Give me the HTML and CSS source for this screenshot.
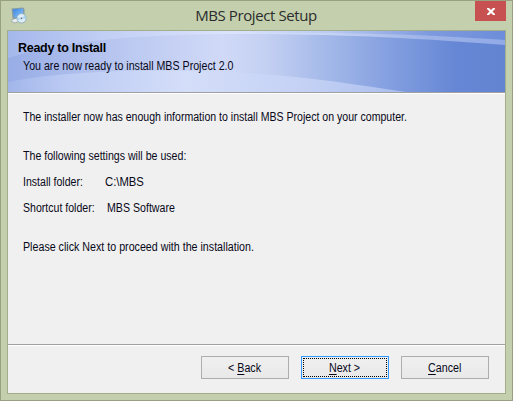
FILE: index.html
```
<!DOCTYPE html>
<html lang="en">
<head>
<meta charset="utf-8">
<title>MBS Project Setup</title>
<link rel="stylesheet" href="styles.css">
</head>
<body>
<div class="window">
  <header class="titlebar">
    <svg class="app-icon" viewBox="0 0 16 17" width="16" height="17">
      <defs>
        <linearGradient id="screen" x1="0" y1="0" x2="1" y2="1"><stop offset="0" stop-color="#3b86e0"/><stop offset="1" stop-color="#8cc4fb"/></linearGradient>
      </defs>
      <path d="M.5 1.500 L12 .5 L13.500 2 V12 L3 13 L1.500 11Z" fill="#849aa5"/>
      <path d="M2 2.200 L12 1.500 V10 L3 10.500 Z" fill="url(#screen)"/>
      <path d="M1 12.500 L6 11 L9 14 L4 16 L.5 14.500 Z" fill="#e8edf0" stroke="#8d9a98" stroke-width=".7"/>
      <circle cx="10.500" cy="11.300" r="4.700" fill="#dceef9" stroke="#7f9fb4" stroke-width=".7"/>
      <path d="M10.500 11.300 L14 8.500 A4.400 4.400 0 0 1 14.700 12 Z M10.500 11.300 L6.700 13.800 A4.400 4.400 0 0 1 6 10.500 Z" fill="#a7d3f0"/>
      <circle cx="10.500" cy="11.300" r="1.200" fill="#4f718c" stroke="#fff" stroke-width=".7"/>
    </svg>
    <h1 class="title">MBS Project Setup</h1>
    <button class="close" aria-label="Close">
      <svg viewBox="0 0 8 7" width="8" height="7"><path d="M0 0h2l2 2 2-2h2v1L5.500 3.500 8 6v1H6L4 5 2 7H0V6l2.500-2.500L0 1z" fill="#fff"/></svg>
    </button>
  </header>
  <main class="dialog">
    <section class="banner">
      <svg class="banner-art" viewBox="0 0 497 61" width="497" height="61" preserveAspectRatio="none">
        <defs>
          <linearGradient id="base"><stop offset="0" stop-color="#98ade6"/><stop offset=".22" stop-color="#b9c7f0"/><stop offset=".43" stop-color="#d0d9f7"/><stop offset=".52" stop-color="#c4d0f2"/><stop offset=".64" stop-color="#a4b9e9"/><stop offset=".78" stop-color="#819ddf"/><stop offset=".9" stop-color="#6687d5"/><stop offset="1" stop-color="#6284d1"/></linearGradient>
          <linearGradient id="upper"><stop offset="0" stop-color="#a5b8eb"/><stop offset=".2" stop-color="#c2cff5"/><stop offset=".45" stop-color="#dce4fc"/><stop offset=".65" stop-color="#b9caf2"/><stop offset=".85" stop-color="#7e9ade"/><stop offset="1" stop-color="#6d8dda"/></linearGradient>
          <linearGradient id="lower"><stop offset="0" stop-color="#a2b6ea"/><stop offset=".15" stop-color="#bccbf3"/><stop offset=".45" stop-color="#d4def9"/><stop offset=".75" stop-color="#c4d1f5"/><stop offset="1" stop-color="#a9bdec"/></linearGradient>
          <linearGradient id="rim"><stop offset="0" stop-color="#fff" stop-opacity="0"/><stop offset=".4" stop-color="#fff" stop-opacity=".2"/><stop offset="1" stop-color="#d5e0ff" stop-opacity=".35"/></linearGradient>
        </defs>
        <rect width="497" height="61" fill="url(#base)"/>
        <path d="M0 0H497V14C380 5 310 3 220 3C135 4 65 8 0 27Z" fill="url(#upper)"/>
        <path d="M497 14C380 5 310 3 220 3C310 1 390 2 497 9Z" fill="url(#rim)"/>
        <path d="M0 51C60 39 155 38 215 41C285 43 345 53 398 61H0Z" fill="url(#lower)"/>
      </svg>
      <div class="banner-text">
        <h2 class="heading">Ready to Install</h2>
        <p class="subheading">You are now ready to install MBS Project 2.0</p>
      </div>
    </section>
    <section class="content">
      <p class="intro narrow">The installer now has enough information to install MBS Project on your computer.</p>
      <p class="lead narrow">The following settings will be used:</p>
      <p class="setting"><span class="install-key narrow">Install folder:</span><span class="path narrow">C:\MBS</span></p>
      <p class="setting"><span class="shortcut-key narrow">Shortcut folder:</span><span class="product narrow">MBS Software</span></p>
      <p class="hint narrow">Please click Next to proceed with the installation.</p>
    </section>
    <footer class="actions">
      <button class="btn"><span class="label">&lt; <u>B</u>ack</span></button>
      <button class="btn primary"><span class="focus"><span class="label"><u>N</u>ext &gt;</span></span></button>
      <button class="btn"><span class="label"><u>C</u>ancel</span></button>
    </footer>
  </main>
</div>
</body>
</html>
```
FILE: styles.css
```
* { box-sizing: border-box; }
body { margin: 0; overflow: hidden; }
h1, h2, p { margin: 0; font-weight: normal; }
.window {
  width: 513px;
  height: 401px;
  padding: 0 6px 6px;
  border: 1px solid #98a283;
  background: #c4d0ad;
  font-family: "Liberation Sans", Arial, sans-serif;
  font-size: 12px;
  line-height: 13px;
  color: #080818;
  white-space: nowrap;
}
.titlebar {
  display: grid;
  grid-template-columns: 31px 1fr 31px;
  height: 29px;
}
.app-icon { margin: 6px 0 0 4px; }
.title {
  padding: 4px 1px 0 0;
  font: 15px/20px "Open Sans", "Noto Sans", sans-serif;
  text-align: center;
  color: #2b2b2b;
  letter-spacing: -0.4px;
}
.close {
  display: flex;
  align-items: center;
  justify-content: center;
  height: 20px;
  padding: 1px 0 0;
  border: 0;
  background: #c75050;
}
.dialog {
  display: flex;
  flex-direction: column;
  width: 499px;
  height: 364px;
  border: 1px solid #a2ae8b;
  background: #f0f0f0;
}
.banner {
  display: grid;
  height: 63px;
  border-bottom: 1px solid #fff;
}
.banner-art, .banner-text { grid-area: 1 / 1; }
.banner-art { display: block; border-bottom: 1px solid #a0a0a0; height: 62px; }
.banner-text { z-index: 1; padding: 11px 0 0 10px; }
.heading { font-weight: bold; font-size: 12.5px; color: #000; letter-spacing: -0.28px; }
.subheading { margin: 5px 0 0 5px; transform: scaleX(0.888); transform-origin: left; }
.content { flex: 1; padding: 17px 15px 0; }
.narrow { transform: scaleX(0.88); transform-origin: left; }
.lead { margin-top: 26px; transform: scaleX(0.884); }
.setting { display: flex; margin-top: 13px; }
.install-key { width: 82px; }
.shortcut-key { width: 84px; }
.path { transform: scaleX(0.94); }
.product { transform: scaleX(0.885); }
.hint { margin-top: 26px; transform: scaleX(0.89); }
.actions {
  display: flex;
  justify-content: flex-end;
  gap: 12px;
  height: 49px;
  padding: 11px 16px 0 0;
  border-top: 1px solid #a0a0a0;
  box-shadow: inset 0 1px #fff;
}
.btn {
  width: 88px;
  height: 23px;
  padding: 1px 0 0;
  border: 1px solid #adadad;
  background: linear-gradient(#f0f0f0, #e8e8e8);
  color: #080818;
  font: inherit;
}
.btn u { text-underline-offset: 2px; text-decoration-thickness: 1px; text-decoration-skip-ink: none; }
.label { display: inline-block; transform: scaleX(0.89); white-space: pre; }
.primary { border-color: #3399ff; padding: 1px; }
.focus {
  display: flex;
  align-items: center;
  justify-content: center;
  height: 19px;
  padding-top: 1px;
  border: 1px dotted #000;
}
```
